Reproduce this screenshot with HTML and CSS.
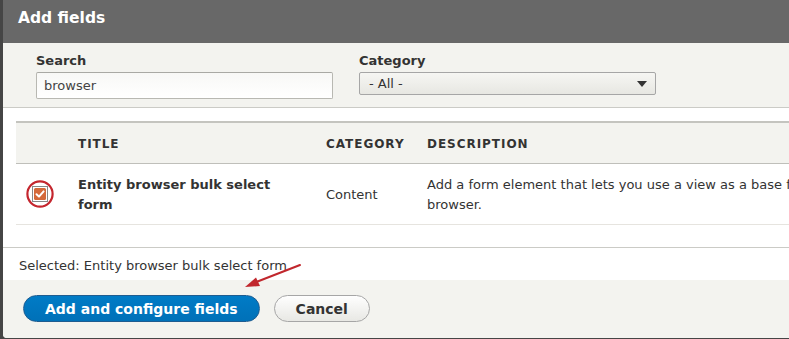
FILE: index.html
```html
<!DOCTYPE html>
<html lang="en">
<head>
  <meta charset="UTF-8">
  <title>Add fields</title>
  <link rel="stylesheet" href="styles.css">
</head>
<body>
  <div class="dialog">
    <div class="dialog-title">Add fields</div>

    <div class="filters">
      <div class="form-item search-item">
        <label for="search">Search</label>
        <input id="search" class="text-input" type="text" value="browser">
      </div>
      <div class="form-item">
        <label>Category</label>
        <div class="select">
          <span>- All -</span>
          <span class="select-arrow"></span>
        </div>
      </div>
    </div>

    <div class="results">
      <table class="fields-table">
        <colgroup>
          <col class="col-check">
          <col class="col-title">
          <col class="col-category">
          <col class="col-description">
        </colgroup>
        <thead>
          <tr>
            <th></th>
            <th>Title</th>
            <th>Category</th>
            <th>Description</th>
          </tr>
        </thead>
        <tbody>
          <tr>
            <td class="check-cell">
              <svg class="checkbox" width="28" height="28" viewBox="0 0 28 28">
                <circle cx="14" cy="14" r="12.6" fill="#fff" stroke="#c4262e" stroke-width="2.2"/>
                <rect x="6.5" y="6.5" width="15" height="15" fill="none" stroke="#111" stroke-width="1" stroke-dasharray="1 1"/>
                <rect x="8" y="8" width="12" height="12" rx="1.5" fill="#d4693a"/>
                <path d="M10.5 14.2 L13 16.6 L17.6 11.4" fill="none" stroke="#fff" stroke-width="2" stroke-linecap="round" stroke-linejoin="round"/>
              </svg>
            </td>
            <td class="title-cell">Entity browser bulk select form</td>
            <td>Content</td>
            <td>Add a form element that lets you use a view as a base for the entity browser.</td>
          </tr>
        </tbody>
      </table>
    </div>

    <div class="selected">Selected: Entity browser bulk select form</div>

    <div class="button-pane">
      <button class="button primary">Add and configure fields</button>
      <button class="button">Cancel</button>
    </div>

    <svg class="pointer" width="70" height="40" viewBox="0 0 70 40">
      <line x1="65" y1="4" x2="20" y2="21.5" stroke="#c1272d" stroke-width="2" stroke-linecap="round"/>
      <polygon points="10,26 21,16.5 25,25" fill="#c1272d"/>
    </svg>
  </div>
</body>
</html>
```

FILE: styles.css
```css
html, body {
  margin: 0;
  padding: 0;
  height: 100%;
  overflow: hidden;
  background-color: #454545;
  font-family: 'DejaVu Sans', 'Liberation Sans', sans-serif;
  color: #333;
}

.dialog {
  position: relative;
  margin-left: 3px;
  width: 900px;
  height: 338px;
  background-color: #fff;
  border-bottom-left-radius: 4px;
  overflow: hidden;
  display: flex;
  flex-direction: column;
}

.dialog-title {
  height: 43px;
  box-sizing: border-box;
  padding: 8px 0 0 15px;
  background-color: #686868;
  color: #fff;
  font-size: 15.5px;
  font-weight: bold;
  line-height: 20px;
}

/* filter row */
.filters {
  display: flex;
  gap: 26px;
  height: 65px;
  box-sizing: border-box;
  padding: 9px 0 0 33px;
  background-color: #f3f3ef;
  border-bottom: 1px solid #cbcbc6;
}
.form-item {
  display: flex;
  flex-direction: column;
  width: 297px;
}
.form-item label {
  font-size: 13px;
  font-weight: bold;
  line-height: 18px;
  margin-bottom: 2px;
  color: #333;
}
.text-input {
  box-sizing: border-box;
  height: 27px;
  margin: 0;
  padding: 0 7px;
  border: 1px solid #b8b8b2;
  border-top-color: #a9a9a4;
  border-radius: 2px;
  background: linear-gradient(#f8f8f6, #fff);
  font-family: inherit;
  font-size: 13px;
  color: #444;
}
.select {
  box-sizing: border-box;
  height: 23px;
  display: flex;
  align-items: center;
  justify-content: space-between;
  padding: 0 8px 0 9px;
  border: 1px solid #a6a6a6;
  border-radius: 2px;
  background: linear-gradient(#f6f6f3, #e7e7e2);
  font-size: 13px;
  color: #333;
}
.select-arrow {
  width: 0;
  height: 0;
  border-left: 5px solid transparent;
  border-right: 5px solid transparent;
  border-top: 6px solid #333;
}

/* results table */
.results {
  height: 140px;
  box-sizing: border-box;
  padding: 13px 0 0 13px;
  border-bottom: 1px solid #cbcbc6;
}
.fields-table {
  table-layout: fixed;
  width: 893px;
  border-collapse: collapse;
  font-size: 13px;
  line-height: 20px;
}
.col-check { width: 50px; }
.col-title { width: 248px; }
.col-category { width: 101px; }
.col-description { width: 494px; }
.fields-table thead tr {
  background-color: #f3f3ef;
  border-top: 2px solid #c4c4bf;
  border-bottom: 1px solid #bfbfba;
}
.fields-table th {
  padding: 11px 12px 9px;
  text-align: left;
  font-size: 12px;
  font-weight: bold;
  letter-spacing: 0.08em;
  text-transform: uppercase;
  color: #333;
}
.fields-table td {
  padding: 11px 12px 9px;
  vertical-align: middle;
  color: #333;
}
.fields-table tbody tr {
  border-bottom: 1px solid #e6e4df;
}
.fields-table td.check-cell {
  padding: 0 0 0 10px;
}
.checkbox {
  display: block;
}
.title-cell {
  font-weight: bold;
}

.selected {
  height: 32px;
  box-sizing: border-box;
  padding: 9px 0 0 16px;
  font-size: 13px;
  line-height: 18px;
  color: #333;
}

.button-pane {
  flex: 1;
  display: flex;
  align-items: flex-start;
  gap: 14px;
  padding: 15px 0 0 20px;
  background-color: #f3f3ef;
}
.button {
  height: 27px;
  margin: 0;
  padding: 0 21px;
  border: 1px solid #a6a6a6;
  border-radius: 20em;
  background: linear-gradient(#fefefe, #e8e8e4);
  font-family: inherit;
  font-size: 14px;
  font-weight: bold;
  color: #333;
}
.button.primary {
  border-color: #1e5c90;
  background: linear-gradient(#007bc6, #0071b8);
  color: #fff;
}

/* annotation arrow drawn over the dialog */
.pointer {
  position: absolute;
  left: 232px;
  top: 261px;
}
```
